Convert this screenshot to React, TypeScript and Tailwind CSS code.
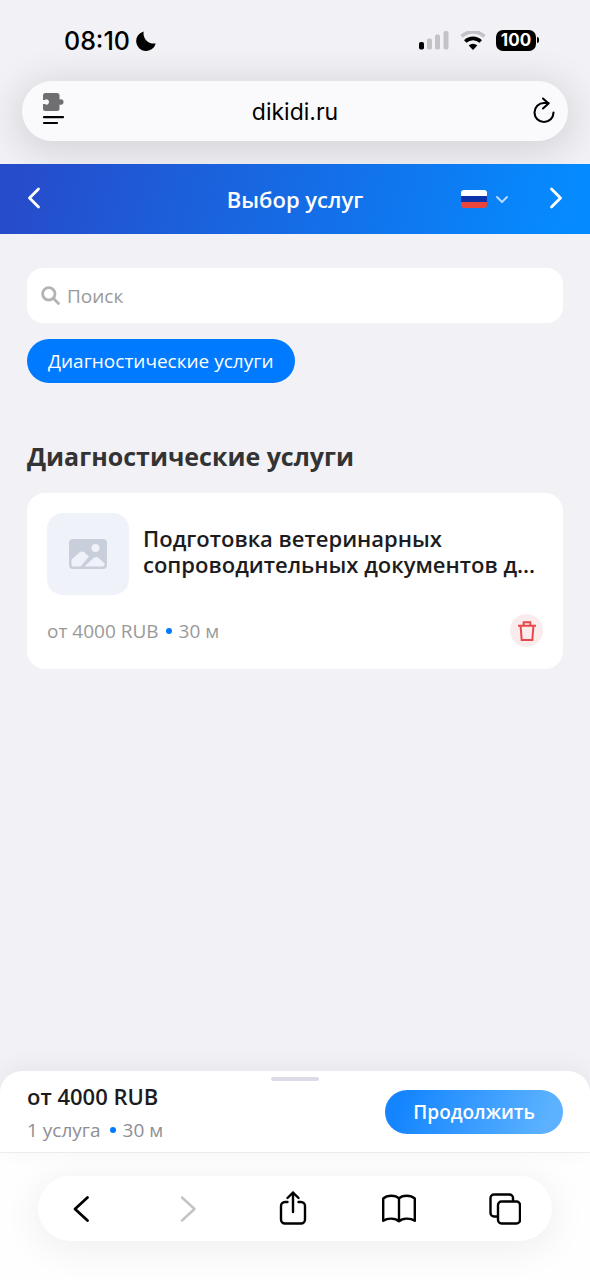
import { useState } from "react";

const services = [
  {
    id: 1,
    name: "Подготовка ветеринарных сопроводительных документов д...",
    price: "от 4000 RUB",
    duration: "30 м",
  },
];

function Dot() {
  return <span className="h-1.5 w-1.5 rounded-full bg-[#007aff]" />;
}

function StatusBar() {
  return (
    <div className="flex h-20 items-center justify-between pl-16 pr-[51px]">
      <div className="flex items-center gap-1.5">
        <span className="text-[25px] font-medium leading-7 text-black">08:10</span>
        <svg className="h-5 w-5" viewBox="0 0 20 20" fill="#000">
          <path d="M7.700.5A9.900 9.900 0 1 0 19.700 12.400 10.200 10.200 0 0 1 7.700.5Z" />
        </svg>
      </div>
      <div className="flex items-center gap-2.5">
        <svg className="h-5 w-8" viewBox="0 0 32 20">
          <rect x="1" y="11" width="5" height="7.500" rx="1.800" fill="#000" />
          <rect x="9" y="7.500" width="5" height="11" rx="1.800" fill="#c3c3c7" />
          <rect x="17" y="3.500" width="5" height="15" rx="1.800" fill="#c3c3c7" />
          <rect x="25.500" y="0" width="5" height="18.500" rx="1.800" fill="#c3c3c7" />
        </svg>
        <svg className="h-5 w-[26px]" viewBox="0 0 26 20" fill="none">
          <path d="M1.600 5.400a16.500 16.500 0 0 1 22.800 0" stroke="#c3c3c7" strokeWidth="3.600" />
          <path d="M5.300 10.500a11 11 0 0 1 15.400 0" stroke="#000" strokeWidth="3.600" />
          <path d="M13 19l-4.300-4.500a6.300 6.300 0 0 1 8.600 0Z" fill="#000" />
        </svg>
        <div className="flex items-center gap-px pb-0.5">
          <span className="flex h-[21px] w-10 items-center justify-center rounded-[7px] bg-black text-[17px] font-bold leading-5 text-white">
            100
          </span>
          <span className="h-1.5 w-0.5 rounded-r-full bg-black" />
        </div>
      </div>
    </div>
  );
}

function AddressBar() {
  return (
    <div className="mx-[22px] mb-[23px] flex h-[60px] items-center justify-between rounded-full bg-[#fafafc] px-3 shadow-[0_6px_36px_8px_rgba(0,0,0,0.11)]">
      <button aria-label="Меню страницы" className="flex w-10 justify-center pb-1">
        <svg className="h-8 w-6" viewBox="0 0 24 32">
          <path
            d="M3.500 0h11.500a2.500 2.500 0 0 1 2.500 2.500v4a2.800 2.800 0 1 1 0 5v4a2.500 2.500 0 0 1-2.500 2.500H3.500A2.500 2.500 0 0 1 1 15.500v-4.500h1.800a2.600 2.600 0 1 0 0-4H1V2.500A2.500 2.500 0 0 1 3.500 0Z"
            fill="#6f6f71"
          />
          <path d="M2 24.200h19M2 30h13" stroke="#000" strokeWidth="2.200" strokeLinecap="round" />
        </svg>
      </button>
      <span className="pt-0.5 text-[23px] leading-7 text-black">dikidi.ru</span>
      <button aria-label="Обновить" className="flex w-10 justify-end">
        <svg className="h-7 w-6" viewBox="0 0 24 28" fill="none" stroke="#000" strokeWidth="2.100" strokeLinecap="round" strokeLinejoin="round">
          <path d="M21.500 15.500A9.500 9.500 0 1 1 12 6h4.500" />
          <path d="M11 1.500 16.500 6.500l-5.500 5" />
        </svg>
      </button>
    </div>
  );
}

function AppHeader() {
  return (
    <header className="grid h-[70px] grid-cols-[1fr_auto_1fr] items-center bg-[linear-gradient(105deg,#264ccb_4%,#058bff_96%)] px-[27px] text-white">
      <button aria-label="Назад" className="w-fit">
        <svg className="h-6 w-3.5" viewBox="0 0 14 24" fill="none" stroke="currentColor" strokeWidth="2.800" strokeLinecap="round" strokeLinejoin="round">
          <path d="M11.500 2 2.500 11l9 9" />
        </svg>
      </button>
      <h1 className="text-[22px] font-semibold leading-8">Выбор услуг</h1>
      <div className="flex items-center justify-end gap-10">
        <button aria-label="Язык: русский" aria-haspopup="listbox" className="flex items-center gap-2">
          <svg className="h-[18px] w-[26px]" viewBox="0 0 26 18">
            <clipPath id="flag">
              <rect width="26" height="18" rx="3" />
            </clipPath>
            <g clipPath="url(#flag)">
              <path d="M0 0h26v6H0z" fill="#fff" />
              <path d="M0 6h26v6H0z" fill="#0b32a8" />
              <path d="M0 12h26v6H0z" fill="#e8463c" />
            </g>
          </svg>
          <svg className="h-3 w-3.5" viewBox="0 0 14 12" fill="none" stroke="#b5dcff" strokeWidth="2" strokeLinecap="round" strokeLinejoin="round">
            <path d="m2 4 5 5 5-5" />
          </svg>
        </button>
        <button aria-label="Вперёд">
          <svg className="h-6 w-3.5" viewBox="0 0 14 24" fill="none" stroke="currentColor" strokeWidth="2.800" strokeLinecap="round" strokeLinejoin="round">
            <path d="m2.500 2 9 9-9 9" />
          </svg>
        </button>
      </div>
    </header>
  );
}

function ServiceCard({ service, onRemove }: { service: (typeof services)[number]; onRemove: () => void }) {
  return (
    <article className="rounded-[18px] bg-white px-5 pb-[22px] pt-5">
      <div className="flex items-start gap-3.5">
        <div className="flex h-[82px] w-[82px] shrink-0 items-center justify-center rounded-2xl bg-[#f0f2f9]">
          <svg className="h-[30px] w-[38px]" viewBox="0 0 38 30">
            <rect width="38" height="30" rx="4" fill="#c9cfda" />
            <circle cx="26.500" cy="9" r="4" fill="#f0f2f9" />
            <path d="M2.500 20.500 11 13.300q2-1.500 4 0l5 4.200L11.500 27.500H4.500a2 2 0 0 1-2-2Z" fill="#f0f2f9" />
            <path d="M15.500 27.500 24.500 19q2.500-2 5 0l6 5.300v1.200a2 2 0 0 1-2 2Z" fill="#f0f2f9" />
          </svg>
        </div>
        <h3 className="-mr-2 pt-3 text-[22px] font-semibold leading-[26px] text-[#1c1c1e]">{service.name}</h3>
      </div>
      <div className="mt-[19px] flex items-center justify-between">
        <p className="flex items-center gap-[7px] text-[19px] leading-7 text-[#999]">
          {service.price}
          <Dot />
          {service.duration}
        </p>
        <button
          aria-label="Удалить"
          onClick={onRemove}
          className="flex h-[33px] w-[33px] items-center justify-center rounded-full bg-[#faebec]"
        >
          <svg className="h-5 w-[18px]" viewBox="0 0 18 20" fill="none" stroke="#e8474c" strokeWidth="2">
            <path d="M0 4.800h18M5.700 4.500V1.200h6.600v3.300M2.600 5l1.100 14h10.600l1.100-14" />
          </svg>
        </button>
      </div>
    </article>
  );
}

function BrowserToolbar() {
  return (
    <div className="overflow-hidden border-t border-[#f0f0f2] bg-[#fefefe] px-[38px] pb-[39px] pt-[23px] text-black">
      <nav className="flex h-[65px] items-center justify-between rounded-full bg-white pl-[25px] pr-[29px] shadow-[0_6px_36px_4px_rgba(0,0,0,0.06)]">
        <button aria-label="Назад" className="flex w-9 justify-center">
          <svg className="h-7 w-5" viewBox="0 0 20 28" fill="none" stroke="#000" strokeWidth="2.800" strokeLinecap="round" strokeLinejoin="round">
            <path d="M16.500 2.500 4 14l12.500 11.500" />
          </svg>
        </button>
        <button aria-label="Вперёд" disabled className="flex w-9 justify-center">
          <svg className="h-7 w-5" viewBox="0 0 20 28" fill="none" stroke="#c4c4c4" strokeWidth="2.500" strokeLinecap="round" strokeLinejoin="round">
            <path d="M5 2.500 17.500 14 5 25.500" />
          </svg>
        </button>
        <button aria-label="Поделиться" className="flex w-9 justify-center">
          <svg className="h-9 w-7" viewBox="0 0 28 36" fill="none" stroke="#000" strokeWidth="2.400" strokeLinecap="round" strokeLinejoin="round">
            <path d="M8.500 11H6a4 4 0 0 0-4 4v13.500a4 4 0 0 0 4 4h16a4 4 0 0 0 4-4V15a4 4 0 0 0-4-4h-2.500" />
            <path d="M14 21V1.500M8.500 7 14 1.500 19.500 7" />
          </svg>
        </button>
        <button aria-label="Закладки" className="flex w-9 justify-center">
          <svg className="h-8 w-9" viewBox="0 0 36 32" fill="none" stroke="#000" strokeWidth="2.400" strokeLinecap="round" strokeLinejoin="round">
            <path d="M18 5.500C14.500 1.800 6.500 1.800 2.200 5.500v22.300c4.300-3 12.300-3 15.800.500 3.500-3.500 11.500-3.500 15.800-.500V5.500C29.500 1.800 21.500 1.800 18 5.500Zm0 0v22.800" />
          </svg>
        </button>
        <button aria-label="Вкладки" className="flex w-9 justify-center">
          <svg className="h-8 w-8" viewBox="0 0 32 32" fill="none" stroke="#000" strokeWidth="2.400" strokeLinejoin="round">
            <rect x="9" y="8.500" width="22" height="22" rx="3.500" />
            <path d="M8 23.500H5A3.500 3.500 0 0 1 1.500 20V5A3.500 3.500 0 0 1 5 1.500h15.500A3.500 3.500 0 0 1 24 5v3" />
          </svg>
        </button>
      </nav>
    </div>
  );
}

export default function App() {
  const [query, setQuery] = useState("");
  const [items, setItems] = useState(services);

  const visible = items.filter((s) => s.name.toLowerCase().includes(query.toLowerCase()));

  return (
    <div className="flex min-h-screen flex-col bg-[#f1f1f6] font-['Open_Sans',sans-serif]">
      <div className="overflow-hidden pt-px font-['Inter',sans-serif]">
        <StatusBar />
        <AddressBar />
      </div>

      <AppHeader />

      <main className="flex-1 px-[27px] pt-[34px]">
        {/* Search */}
        <label className="flex h-[55px] items-center gap-[7px] rounded-2xl bg-white px-3.5">
          <svg className="h-[19px] w-[19px] shrink-0" viewBox="0 0 19 19" fill="none" stroke="#b3b3b3" strokeWidth="2.800">
            <circle cx="7.800" cy="7.800" r="6.200" />
            <path d="m12.300 12.300 5.200 5.200" strokeLinecap="round" />
          </svg>
          <input
            type="search"
            aria-label="Поиск"
            placeholder="Поиск"
            value={query}
            onChange={(e) => setQuery(e.target.value)}
            className="w-full text-[19px] leading-7 text-[#333] outline-none placeholder:text-[#999]"
          />
        </label>

        <button className="mt-4 flex h-11 items-center rounded-full bg-[#007aff] px-[21px] text-[19px] leading-7 text-white">
          Диагностические услуги
        </button>

        <h2 className="mb-5 mt-14 text-[25px] font-bold leading-[34px] text-[#333]">Диагностические услуги</h2>
        <div className="space-y-4">
          {visible.map((service) => (
            <ServiceCard
              key={service.id}
              service={service}
              onRemove={() => setItems((prev) => prev.filter((s) => s.id !== service.id))}
            />
          ))}
        </div>
      </main>

      {/* Order summary */}
      <section className="relative flex h-[81px] items-center justify-between rounded-t-[22px] bg-white px-[27px] shadow-[0_-4px_24px_rgba(0,0,0,0.05)]">
        <span className="absolute left-1/2 top-1.5 h-1 w-12 -translate-x-1/2 rounded-full bg-[#dcdce8]" />
        <div className="space-y-1">
          <p className="text-[22px] font-semibold leading-8 text-[#1c1c1e]">от 4000 RUB</p>
          <p className="flex items-center gap-[7px] text-[19px] leading-7 text-[#8e8e93]">
            <span className="pr-0.5">1 услуга</span>
            <Dot />
            30 м
          </p>
        </div>
        <button className="h-11 rounded-full bg-[linear-gradient(110deg,#1485ff_10%,#5cb2ff_90%)] px-7 text-[19px] font-semibold leading-7 text-white">
          Продолжить
        </button>
      </section>

      <BrowserToolbar />
    </div>
  );
}
